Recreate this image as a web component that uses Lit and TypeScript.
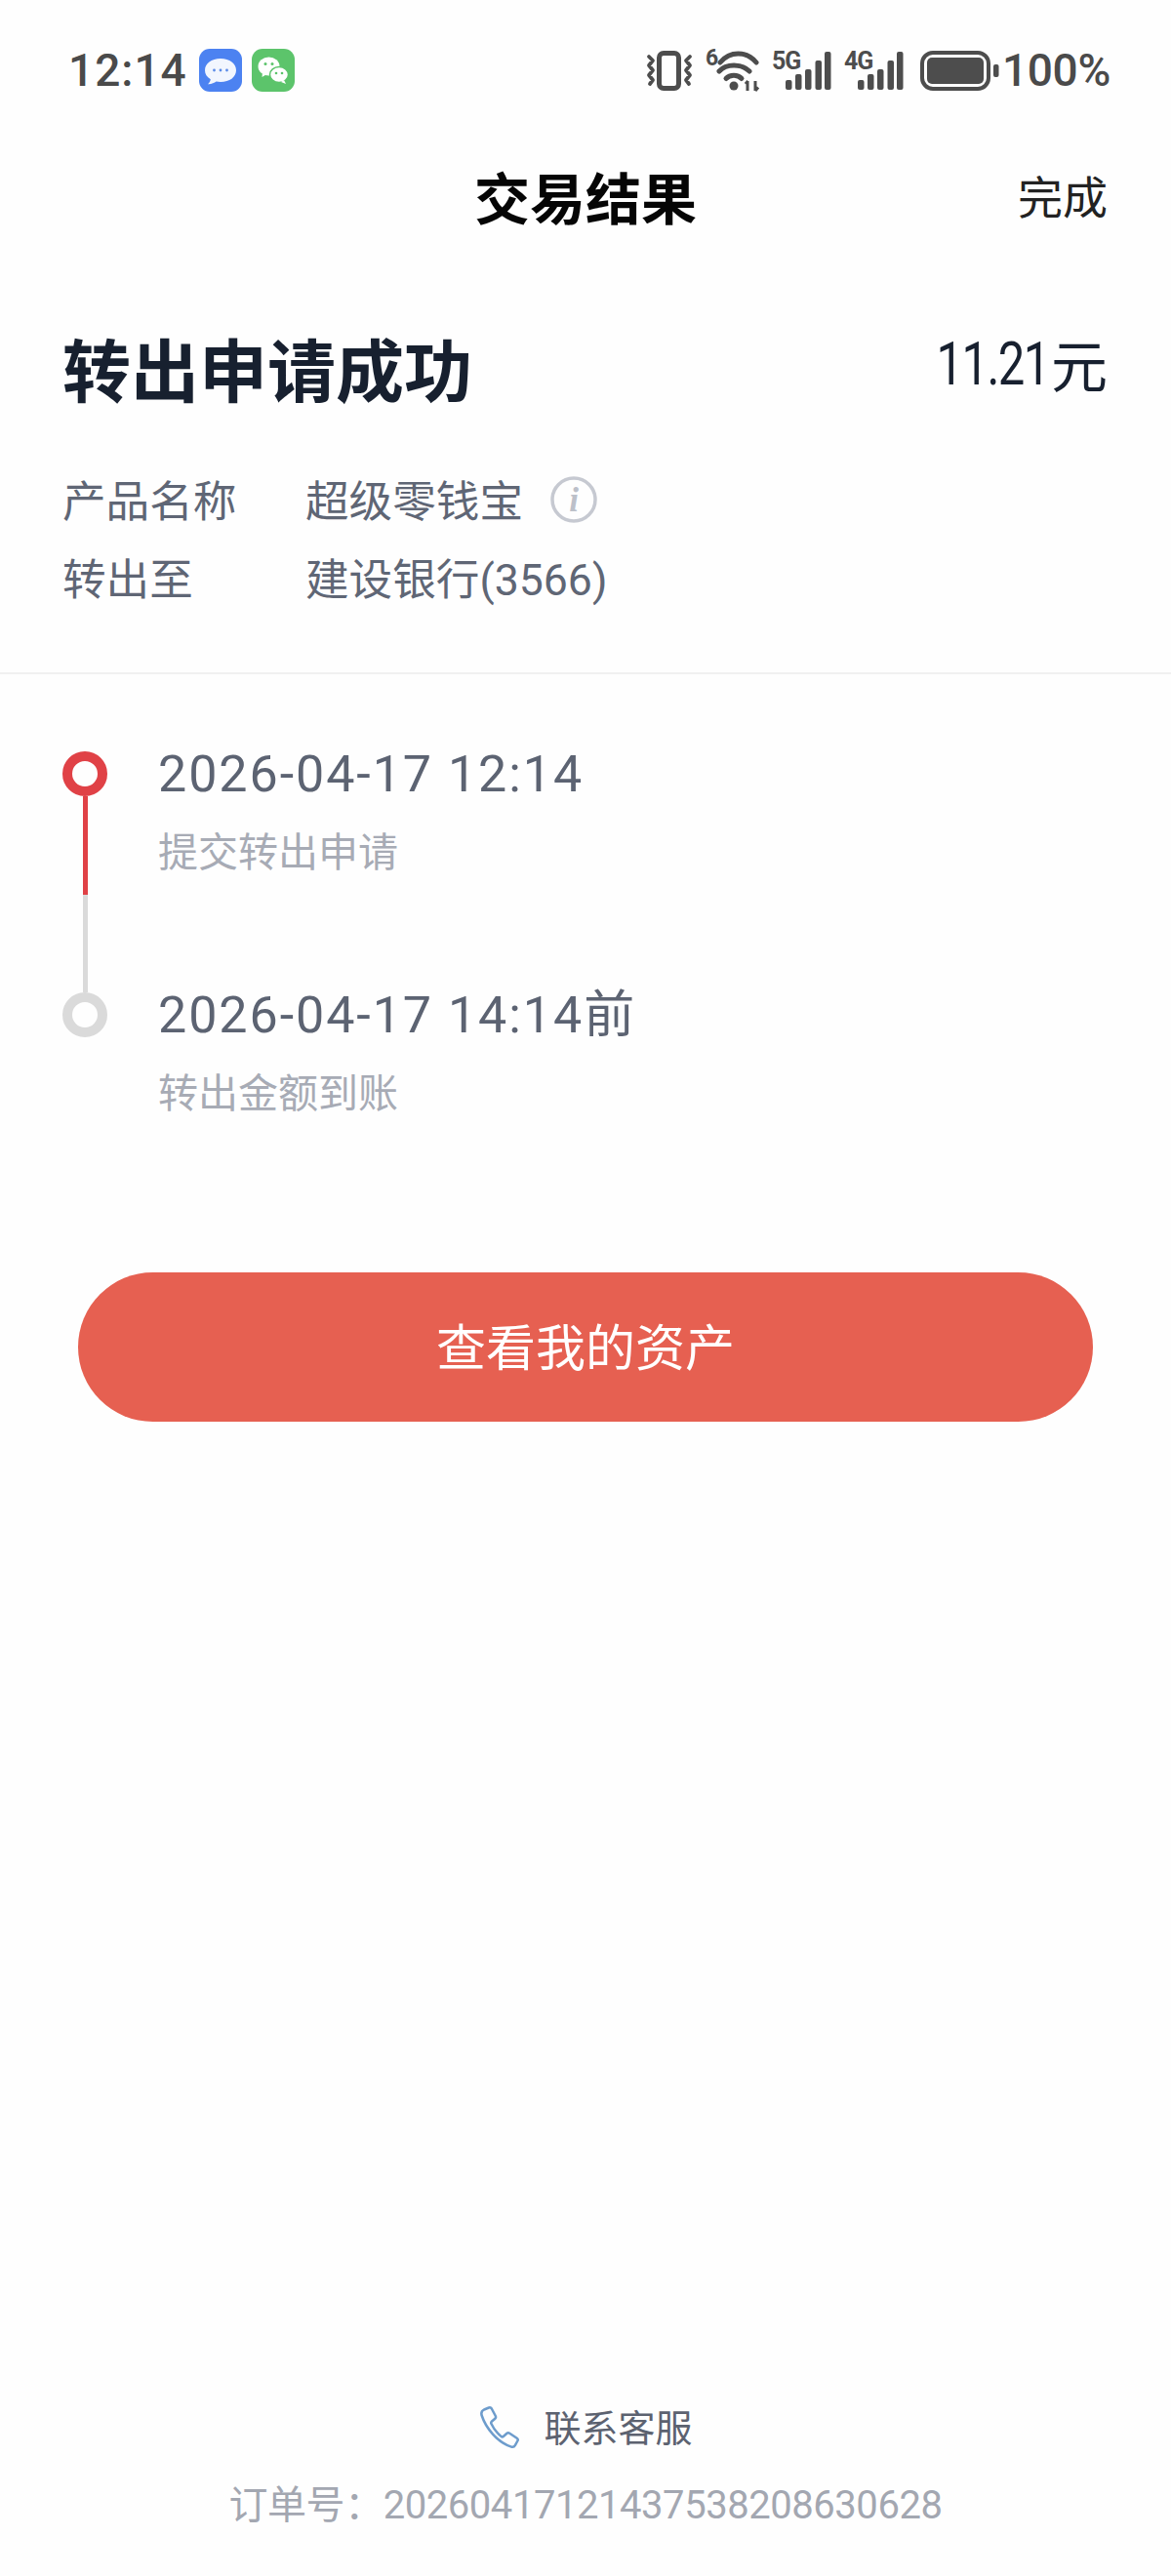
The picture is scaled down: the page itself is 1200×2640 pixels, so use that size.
import { LitElement, html, css, svg } from "lit";
import { customElement } from "lit/decorators.js";

const bars = [[0, 82], [10, 76], [20, 71], [30.5, 62], [40, 53]];
const signal = (label: string, last = false) => html`<svg class="sig ${last ? "last" : ""}" width="62" height="54" viewBox="0 -6 62 54">
  <text class="sigt" x="0" y="20">${label}</text>
  ${bars.map(([x, t]) => svg`<rect x=${x + 14} y=${t - 51} width="6.5" height=${92 - t} rx="2" fill="#4d4d4d"></rect>`)}
</svg>`;

@customElement("app-root")
export class AppRoot extends LitElement {
  static styles = css`
    :host { display: block; width: 1200px; font-family: Roboto, "Noto Sans CJK SC", sans-serif; background: #fefefe; }
    .app { min-height: 2640px; display: flex; flex-direction: column; background: #fefefe; }
    .status { height: 144px; padding: 0 62px 0 70px; display: flex; align-items: center; box-sizing: border-box; color: #4a4a4a; }
    .time { font-size: 46px; font-weight: 500; letter-spacing: 1px; width: 134px; }
    .apps { display: flex; gap: 10px; }
    .icons { margin-left: auto; display: flex; align-items: center; }
    .vib { margin-right: 13px; }
    .wifi { margin-right: 12px; }
    .sig { margin-right: 12px; }
    .sig.last { margin-right: 16px; }
    .bat { margin-right: 3px; }
    .sigt { font: 700 25px "Roboto", sans-serif; fill: #4d4d4d; letter-spacing: -1px; }
    .pct { font-size: 46px; font-weight: 500; letter-spacing: -0.3px; }
    .nav { height: 116px; display: flex; align-items: center; justify-content: center; position: relative; }
    .nav h1 { margin: 0 0 5px; font-size: 57px; font-weight: 700; color: #050505; }
    .done { position: absolute; right: 65px; top: calc(50% - 3px); transform: translateY(-50%); font-size: 46px; color: #222; }
    .summary { padding: 59px 65px 57px 64px; border-bottom: 2px solid #f0f0f0; }
    .head { display: flex; align-items: center; justify-content: space-between; height: 120px; margin-bottom: 33px; }
    .head h2 { margin: 0 0 5px; font-size: 70px; font-weight: 700; color: #17202f; }
    .amt { font-size: 58px; color: #17202f; padding-bottom: 14px; display: flex; align-items: center; }
    .num { display: inline-block; font-size: 62px; letter-spacing: -2px; margin-right: 2px; transform: scaleX(0.79); transform-origin: right center; }
    .row { display: flex; align-items: center; height: 80px; font-size: 44.6px; color: #5f6675; }
    .row > span { margin-bottom: 4px; }
    .k { width: 249px; }
    .info { margin-left: 28px; }
    .timeline { padding: 79px 64px 0; }
    .item { display: flex; gap: 52px; }
    .item.first { height: 247px; }
    .node { width: 46px; display: flex; flex-direction: column; align-items: center; }
    .dot { width: 46px; height: 46px; box-sizing: border-box; border-radius: 50%; border: 10px solid #e04146; flex: none; }
    .dot.off { border-color: #dadada; }
    .seg { width: 5px; height: 101px; background: #e04146; }
    .seg.off { height: 100px; background: #dadada; }
    .txt { margin-top: -16px; }
    .date { height: 80px; line-height: 80px; font-size: 52px; color: #5c6372; letter-spacing: 1.95px; }
    .sub { height: 80px; line-height: 80px; font-size: 41px; color: #a7abb5; }
    .btn { margin: 143px 80px 0; height: 153px; box-sizing: border-box; padding-bottom: 5px; border-radius: 77px; background: #e66051; color: #fff; font-size: 51px; display: flex; align-items: center; justify-content: center; }
    .foot { margin-top: auto; padding-bottom: 32px; display: flex; flex-direction: column; align-items: center; }
    .contact { height: 80px; display: flex; align-items: center; gap: 23px; font-size: 38px; color: #5c6270; }
    .contact span { margin-bottom: 5px; }
    .order { height: 80px; line-height: 80px; font-size: 40px; color: #a3a7b1; letter-spacing: -0.45px; }
  `;

  render() {
    return html`<div class="app">
      <div class="status">
        <span class="time">12:14</span>
        <div class="apps">
          <svg width="44" height="44" viewBox="0 0 44 44">
            <rect width="44" height="44" rx="11" fill="#4c82f1"></rect>
            <path d="M22 10c9.4 0 16 5 16 12s-6.6 12-16 12c-1.6 0-3-.1-4.400-.4-2 1.500-5 2.800-8.600 2.600 1.500-1.200 2.500-3 2.800-5C7.900 29 6 25.800 6 22c0-7 6.600-12 16-12z" fill="#f2f6fe"></path>
            <circle cx="15.500" cy="22" r="1.400" fill="#5c8ce8"></circle><circle cx="22" cy="22" r="1.400" fill="#5c8ce8"></circle><circle cx="28.500" cy="22" r="1.400" fill="#5c8ce8"></circle>
          </svg>
          <svg width="44" height="44" viewBox="0 0 44 44">
            <rect width="44" height="44" rx="11" fill="#5cc46b"></rect>
            <ellipse cx="17.500" cy="18" rx="11" ry="9.500" fill="#fff"></ellipse>
            <path d="M11 24l-.5 5 5-3z" fill="#fff"></path>
            <ellipse cx="28" cy="26.500" rx="9.500" ry="8" fill="#fff" stroke="#5cc46b" stroke-width="1.500"></ellipse>
            <path d="M33 32l2 4-5-2z" fill="#fff"></path>
            <circle cx="14" cy="15.500" r="1.500" fill="#5cc46b"></circle><circle cx="21" cy="15.500" r="1.500" fill="#5cc46b"></circle>
            <circle cx="25" cy="25" r="1.300" fill="#5cc46b"></circle><circle cx="31" cy="25" r="1.300" fill="#5cc46b"></circle>
          </svg>
        </div>
        <div class="icons">
          <svg class="vib" width="48" height="41" viewBox="0 0 48 41" fill="none" stroke="#4d4d4d">
            <rect x="13.500" y="2.500" width="20" height="36" rx="4.500" stroke-width="5"></rect>
            <path d="M3 6l4 4-4 5 4 5-4 5 4 5-3 4M45 6l-4 4 4 5-4 5 4 5-4 5 3 4" stroke-width="3.800" stroke-linecap="round" stroke-linejoin="round"></path>
          </svg>
          <svg class="wifi" width="56" height="52" viewBox="0 -4 56 52" fill="none" stroke="#4d4d4d">
            <text x="0" y="17" style="font:700 23px Roboto,sans-serif;fill:#4d4d4d;stroke:none">6</text>
            <path d="M15 14C25 2 42 2 52 14" stroke-width="5" stroke-linecap="round"></path>
            <path d="M14 23C21 15 37 15 45 23" stroke-width="5" stroke-linecap="round"></path>
            <path d="M21 30.500C25 26 33 26 37 30.500" stroke-width="5" stroke-linecap="round"></path>
            <circle cx="29" cy="38" r="4.500" fill="#4d4d4d" stroke="none"></circle>
            <path d="M43 33v10M41 36l2.500-3M51 33v10M51 43l3-3.500" stroke-width="3"></path>
          </svg>
          ${signal("5G")}
          ${signal("4G", true)}
          <svg class="bat" width="81" height="41" viewBox="0 0 81 41">
            <rect x="2" y="2" width="68" height="37" rx="11" fill="none" stroke="#4d4d4d" stroke-width="4"></rect>
            <rect x="7" y="7" width="58" height="27" rx="5" fill="#4d4d4d"></rect>
            <rect x="75" y="14" width="5.500" height="13" rx="2" fill="#4d4d4d"></rect>
          </svg>
          <span class="pct">100%</span>
        </div>
      </div>

      <div class="nav"><h1>交易结果</h1><span class="done">完成</span></div>

      <div class="summary">
        <div class="head"><h2>转出申请成功</h2><span class="amt"><span class="num">11.21</span>元</span></div>
        <div class="row"><span class="k">产品名称</span><span>超级零钱宝</span>
          <svg class="info" width="48" height="48" viewBox="0 0 48 48">
            <circle cx="24" cy="24" r="22" fill="none" stroke="#c6c9d1" stroke-width="3.500"></circle>
            <text x="24" y="36" text-anchor="middle" style="font:italic 700 35px 'Liberation Serif',serif;fill:#bcc0c9">i</text>
          </svg>
        </div>
        <div class="row"><span class="k">转出至</span><span>建设银行(3566)</span></div>
      </div>

      <div class="timeline">
        <div class="item first">
          <div class="node"><span class="dot"></span><span class="seg"></span><span class="seg off"></span></div>
          <div class="txt"><div class="date">2026-04-17 12:14</div><div class="sub">提交转出申请</div></div>
        </div>
        <div class="item">
          <div class="node"><span class="dot off"></span></div>
          <div class="txt"><div class="date">2026-04-17 14:14前</div><div class="sub">转出金额到账</div></div>
        </div>
      </div>

      <div class="btn">查看我的资产</div>

      <div class="foot">
        <div class="contact">
          <svg width="44" height="44" viewBox="0 0 44 44" fill="none">
            <path d="M6 3.500l5-2c1.200-.4 2.200 0 2.800 1l4 7.500c.5 1 .3 2-.5 2.700L14 15.500c-.8.7-1 1.600-.5 2.600 2.200 4.800 5.800 9.400 10 12.800.8.600 1.800.6 2.600-.1l3.400-3c.8-.7 1.800-.7 2.700-.1l7.500 5c1 .7 1.300 1.700.7 2.800l-2.400 4.400c-.8 1.500-2.300 2.200-4 1.700C20 37 8 23 3.500 9c-.5-2.300.5-4.500 2.500-5.500z" stroke="#6d9ccc" stroke-width="2.500" stroke-linejoin="round"></path>
          </svg>
          <span>联系客服</span>
        </div>
        <div class="order">订单号：20260417121437538208630628</div>
      </div>
    </div>`;
  }
}
